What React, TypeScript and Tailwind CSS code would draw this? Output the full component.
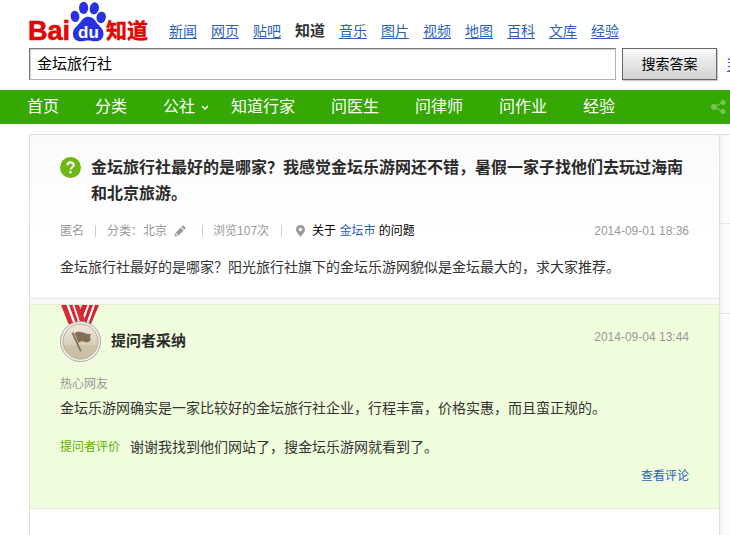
import React from "react";

const channels = ["新闻", "网页", "贴吧", "知道", "音乐", "图片", "视频", "地图", "百科", "文库", "经验"];
const sections = ["首页", "分类", "公社", "知道行家", "问医生", "问律师", "问作业", "经验"];

function Logo() {
  return (
    <svg width="121" height="42" viewBox="0 0 121 42" role="img" aria-label="Baidu 知道" className="shrink-0 overflow-visible">
      <g fill="#e10602" fontWeight="bold">
        <text x="-1" y="40" fontSize="27" stroke="#e10602" strokeWidth="0.6">Bai</text>
        <text x="77" y="38" fontSize="21" stroke="#e10602" strokeWidth="0.5">知道</text>
      </g>
      <g fill="#2932e1">
        <ellipse cx="46" cy="16.4" rx="4.4" ry="5.7" transform="rotate(-8 46 16.4)" />
        <ellipse cx="54.6" cy="7.900" rx="4.6" ry="6.100" />
        <ellipse cx="65.3" cy="8.4" rx="4.6" ry="6.100" transform="rotate(12 65.3 8.4)" />
        <ellipse cx="72.2" cy="17.400" rx="4.7" ry="5.800" transform="rotate(14 72.2 17.4)" />
        <path d="M59.300 16.800c4.200 0 6 2.800 8.200 5.700 2.600 3.400 7 6 7 11.200 0 5-3.500 7.600-7.700 7.600-3 0-4.600-.8-7.500-.8s-4.600.8-7.600.8c-4.700 0-7.800-2.800-7.800-7.600 0-5.200 4.500-7.800 7.200-11.200 2.300-3 4.200-5.700 8.200-5.700z" />
      </g>
      <text x="49" y="37.500" fontSize="17" fontWeight="bold" fill="#fff">du</text>
    </svg>
  );
}

function Medal() {
  return (
    <svg width="42" height="57" viewBox="0 0 42 57" aria-hidden="true" className="shrink-0">
      <defs>
        <linearGradient id="disc" x1="0" y1="0" x2="0" y2="1">
          <stop offset="0" stopColor="#efe9dc" />
          <stop offset="0.6" stopColor="#d8cdb9" />
          <stop offset="0.62" stopColor="#ccc0a9" />
          <stop offset="1" stopColor="#c9bda6" />
        </linearGradient>
      </defs>
      <path d="M22 0h17l-8 19H19l-2-6z" fill="#cf2631" />
      <path d="M27.500 0h2l-7 19h-2.500zM33 0h2l-6.500 19h-2.500z" fill="#fff" />
      <path d="M1 0h18l6.500 16-2 3H8.500z" fill="#d42b35" />
      <path d="M6.500 0H9l7 19h-2.500zM12.500 0h1.800l6.500 19h-2z" fill="#fff" />
      <path d="M19 0h3l-1.500 3.500z" fill="#f6dcd0" />
      <circle cx="20.500" cy="36.500" r="20" fill="#f4f0e6" stroke="#a9a6a8" strokeWidth="1" />
      <circle cx="20.500" cy="36.500" r="17.500" fill="url(#disc)" stroke="#b7ab94" strokeWidth="1" />
      <path d="M11.500 28l1.800-.8L21.500 46l-1.400.8z" fill="#806e55" />
      <path d="M14.500 28c3.500-2 6-1.500 8.500-.5 3 1.200 5 2 8 1.300-1.200 2.200-1.300 4-.2 5.600-1 2.800-3.800 3.600-6.300 2.400-2.300-1.100-4-.7-6.100 1z" fill="#806e55" />
    </svg>
  );
}

function Divider({ className = "" }: { className?: string }) {
  return <span aria-hidden="true" className={`h-3 w-px bg-[#c8d3c4] ${className}`} />;
}

function Header() {
  return (
    <header>
      <div className="flex h-12 items-start gap-[19px] pl-[29px]">
        <Logo />
        <nav aria-label="产品" className="mt-[19px] flex gap-3.5 text-sm leading-6 whitespace-nowrap">
          {channels.map((name) =>
            name === "知道" ? (
              <strong key={name} className="text-[15px] leading-6 text-[#333]">{name}</strong>
            ) : (
              <a key={name} href="#" className="text-[#2a62b8] underline underline-offset-2">{name}</a>
            ),
          )}
        </nav>
      </div>
      <form className="flex h-8 items-center pl-[29px]" onSubmit={(e) => e.preventDefault()}>
        <input
          aria-label="搜索"
          defaultValue="金坛旅行社"
          className="h-8 min-w-0 flex-1 border border-[#b0b0b0] border-t-[#777] border-l-[#777] bg-white px-[7px] pb-1 text-[15px] text-black shadow-[inset_1px_1px_1px_#ccc] outline-none"
        />
        <button type="submit" className="ml-1.5 h-8 w-[95px] shrink-0 border border-[#666] bg-linear-to-b from-[#f9f9f9] to-[#d2d2d2] text-sm text-black shadow-[1px_1px_1px_#ccc]">
          搜索答案
        </button>
        <a href="#" className="-mr-[53px] ml-2.5 w-14 shrink-0 text-sm whitespace-nowrap text-[#2a62b8] underline underline-offset-2">
          我要提问
        </a>
      </form>
    </header>
  );
}

function GreenBar() {
  return (
    <nav aria-label="频道" className="mt-2.5 flex h-[34px] items-center bg-[#35a803] pl-[27px] text-base whitespace-nowrap text-white">
      <div className="flex flex-1 gap-9">
        {sections.map((name) => (
          <a key={name} href="#" className="relative">
            {name}
            {name === "公社" && (
              <svg width="8" height="6" viewBox="0 0 8 6" className="absolute top-2.5 left-[38px]" aria-hidden="true">
                <path d="M1 1l3 3 3-3" fill="none" stroke="#fff" strokeWidth="1.400" />
              </svg>
            )}
          </a>
        ))}
      </div>
      <button type="button" aria-label="分享" className="mr-1">
        <svg width="15" height="14" viewBox="0 0 15 14" fill="#79c455">
          <path d="M3 7l8.500-4.500M3 7l8.500 4.500" stroke="#79c455" strokeWidth="1.300" />
          <circle cx="3" cy="7" r="3" />
          <circle cx="12" cy="2.600" r="2.500" />
          <circle cx="12" cy="11.400" r="2.500" />
        </svg>
      </button>
    </nav>
  );
}

function Question() {
  return (
    <section className="border-b border-[#e8e8e8] bg-linear-to-b from-[#fafafa] to-white to-60% px-[30px] pt-5 pb-[19px]">
      <div className="flex items-start gap-2.5">
        <svg width="21" height="21" viewBox="0 0 21 21" className="mt-0.5 shrink-0" aria-hidden="true">
          <circle cx="10.500" cy="10.500" r="10.500" fill="#6fb713" />
          <path d="M7.500 8.300c0-3.800 6.200-3.800 6.200-.3 0 2.300-3 2.200-3 4.600" fill="none" stroke="#fff" strokeWidth="2.100" />
          <circle cx="10.600" cy="15.300" r="1.300" fill="#fff" />
        </svg>
        <h1 className="text-base leading-[26px] font-bold text-[#2b2b2b]">
          金坛旅行社最好的是哪家？我感觉金坛乐游网还不错，暑假一家子找他们去玩过海南和北京旅游。
        </h1>
      </div>
      <div className="mt-3 flex items-center text-xs leading-6 whitespace-nowrap text-[#999]">
        <span>匿名</span>
        <Divider className="mx-[11px]" />
        <span>分类：北京</span>
        <button type="button" aria-label="修改分类" className="ml-[7px]">
          <svg width="12" height="12" viewBox="0 0 12 12" fill="#999">
            <path d="M0.500 11.500l.6-3.200 2.700 2.700zM1.700 7.500l5-5 2.900 2.900-5 5zM7.400 1.800l1-1c.5-.5 1-.5 1.500 0l1.400 1.400c.5.5.5 1 0 1.500l-1 1z" />
          </svg>
        </button>
        <Divider className="mr-2.5 ml-4" />
        <span>浏览107次</span>
        <Divider className="mr-3.5 ml-3" />
        <svg width="9" height="12" viewBox="0 0 9 12" aria-hidden="true">
          <path fillRule="evenodd" fill="#999" d="M4.500 0a4.500 4.500 0 0 1 4.500 4.500C9 7.500 5.800 9.500 4.500 12 3.200 9.500 0 7.500 0 4.500A4.500 4.500 0 0 1 4.500 0zm0 2.700a1.800 1.800 0 1 0 0 3.600 1.800 1.800 0 0 0 0-3.600z" />
        </svg>
        <span className="ml-[7px] text-black">
          关于 <a href="#" className="text-[#2a62b8]">金坛市</a> 的问题
        </span>
        <time className="ml-auto">2014-09-01 18:36</time>
      </div>
      <p className="mt-3 text-sm leading-6 text-[#333]">
        金坛旅行社最好的是哪家？阳光旅行社旗下的金坛乐游网貌似是金坛最大的，求大家推荐。
      </p>
    </section>
  );
}

function Answer() {
  return (
    <section className="border-y border-[#e4ecd8] bg-[#effddc] px-[30px] pb-5">
      <div className="flex items-start">
        <Medal />
        <h2 className="mt-6 ml-[9px] text-[15px] leading-6 font-bold text-[#2b2b2b]">提问者采纳</h2>
        <time className="mt-5 ml-auto text-xs leading-6 text-[#999]">2014-09-04 13:44</time>
      </div>
      <p className="mt-2.5 text-xs leading-6 text-[#999]">热心网友</p>
      <p className="text-sm leading-6 text-[#333]">
        金坛乐游网确实是一家比较好的金坛旅行社企业，行程丰富，价格实惠，而且蛮正规的。
      </p>
      <div className="mt-[15px] flex gap-2.5 leading-6">
        <span className="text-xs leading-6 text-[#5cb000]">提问者评价</span>
        <p className="text-sm leading-6 text-[#333]">谢谢我找到他们网站了，搜金坛乐游网就看到了。</p>
      </div>
      <div className="mt-[5px] text-right text-xs leading-6">
        <a href="#" className="text-[#2a62b8]">查看评论</a>
      </div>
    </section>
  );
}

export default function App() {
  return (
    <div className="flex min-h-screen flex-col overflow-x-hidden bg-white font-['Liberation_Sans','Noto_Sans_CJK_SC',sans-serif]">
      <Header />
      <GreenBar />
      <div className="mt-2.5 flex flex-1 pl-[29px]">
        <main className="flex min-w-0 flex-1 flex-col border-x border-t border-[#dfdfdf] bg-white">
          <Question />
          <div className="h-[5px] bg-[#f8f8f8]" />
          <Answer />
        </main>
        <aside className="w-2.5 shrink-0 border-t border-[#dfdfdf] bg-linear-to-r from-[#f1f1f1] to-[#fbfbfb] to-40%">
          <div className="h-[89px] border-b border-[#e4e4e4]" />
          <div className="h-[90px] border-b border-[#e4e4e4]" />
        </aside>
      </div>
    </div>
  );
}
